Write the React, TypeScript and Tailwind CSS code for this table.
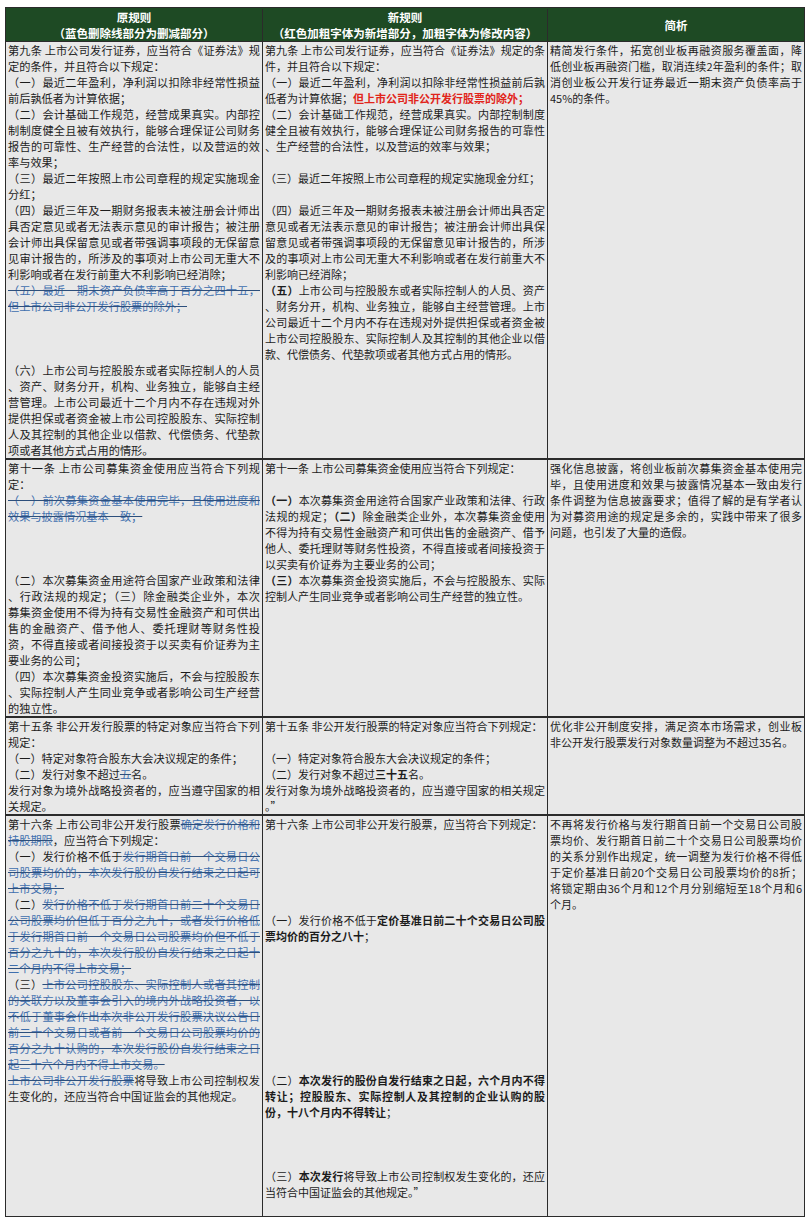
import React from "react";

type Seg = string | { t: string; k: "d" | "r" | "b" };
type Line = Seg | Seg[];
type Block = Line[] | null; // null = one empty line
type Row = { cells: [Block[], Block[], Block[]]; minH?: string };

const d = (t: string): Seg => ({ t, k: "d" });
const r = (t: string): Seg => ({ t, k: "r" });
const b = (t: string): Seg => ({ t, k: "b" });
const gap = (n: number): Block[] => Array(n).fill(null);

const segClass = {
  d: "text-[#3f6fae] line-through decoration-[#2d4f7c]",
  r: "font-bold text-[#e1251b]",
  b: "font-bold",
};

const rows: Row[] = [
  {
    cells: [
      [
        ["第九条 上市公司发行证券，应当符合《证券法》规", "定的条件，并且符合以下规定："],
        ["（一）最近二年盈利，净利润以扣除非经常性损益", "前后孰低者为计算依据；"],
        [
          "（二）会计基础工作规范，经营成果真实。内部控",
          "制制度健全且被有效执行，能够合理保证公司财务",
          "报告的可靠性、生产经营的合法性，以及营运的效",
          "率与效果；",
        ],
        ["（三）最近二年按照上市公司章程的规定实施现金", "分红；"],
        [
          "（四）最近三年及一期财务报表未被注册会计师出",
          "具否定意见或者无法表示意见的审计报告；被注册",
          "会计师出具保留意见或者带强调事项段的无保留意",
          "见审计报告的，所涉及的事项对上市公司无重大不",
          "利影响或者在发行前重大不利影响已经消除；",
        ],
        [d("（五）最近一期末资产负债率高于百分之四十五，"), d("但上市公司非公开发行股票的除外；")],
        ...gap(3),
        [
          "（六）上市公司与控股股东或者实际控制人的人员",
          "、资产、财务分开，机构、业务独立，能够自主经",
          "营管理。上市公司最近十二个月内不存在违规对外",
          "提供担保或者资金被上市公司控股股东、实际控制",
          "人及其控制的其他企业以借款、代偿债务、代垫款",
          "项或者其他方式占用的情形。",
        ],
      ],
      [
        ["第九条 上市公司发行证券，应当符合《证券法》规定的条", "件，并且符合以下规定："],
        [
          "（一）最近二年盈利，净利润以扣除非经常性损益前后孰",
          ["低者为计算依据；", r("但上市公司非公开发行股票的除外；")],
        ],
        [
          "（二）会计基础工作规范，经营成果真实。内部控制制度",
          "健全且被有效执行，能够合理保证公司财务报告的可靠性",
          "、生产经营的合法性，以及营运的效率与效果；",
        ],
        null,
        ["（三）最近二年按照上市公司章程的规定实施现金分红；"],
        null,
        [
          "（四）最近三年及一期财务报表未被注册会计师出具否定",
          "意见或者无法表示意见的审计报告；被注册会计师出具保",
          "留意见或者带强调事项段的无保留意见审计报告的，所涉",
          "及的事项对上市公司无重大不利影响或者在发行前重大不",
          "利影响已经消除；",
        ],
        [
          [b("（五）"), "上市公司与控股股东或者实际控制人的人员、资产"],
          "、财务分开，机构、业务独立，能够自主经营管理。上市",
          "公司最近十二个月内不存在违规对外提供担保或者资金被",
          "上市公司控股股东、实际控制人及其控制的其他企业以借",
          "款、代偿债务、代垫款项或者其他方式占用的情形。",
        ],
      ],
      [
        [
          "精简发行条件，拓宽创业板再融资服务覆盖面，降",
          "低创业板再融资门槛，取消连续2年盈利的条件；取",
          "消创业板公开发行证券最近一期末资产负债率高于",
          "45%的条件。",
        ],
      ],
    ],
  },
  {
    cells: [
      [
        ["第十一条 上市公司募集资金使用应当符合下列规", "定："],
        [d("（一）前次募集资金基本使用完毕，且使用进度和"), d("效果与披露情况基本一致；")],
        ...gap(3),
        [
          "（二）本次募集资金用途符合国家产业政策和法律",
          "、行政法规的规定；（三）除金融类企业外，本次",
          "募集资金使用不得为持有交易性金融资产和可供出",
          "售的金融资产、借予他人、委托理财等财务性投",
          "资，不得直接或者间接投资于以买卖有价证券为主",
          "要业务的公司；",
        ],
        [
          "（四）本次募集资金投资实施后，不会与控股股东",
          "、实际控制人产生同业竞争或者影响公司生产经营",
          "的独立性。",
        ],
      ],
      [
        ["第十一条 上市公司募集资金使用应当符合下列规定："],
        null,
        [
          [b("（一）"), "本次募集资金用途符合国家产业政策和法律、行政"],
          ["法规的规定；", b("（二）"), "除金融类企业外，本次募集资金使用"],
          "不得为持有交易性金融资产和可供出售的金融资产、借予",
          "他人、委托理财等财务性投资，不得直接或者间接投资于",
          "以买卖有价证券为主要业务的公司；",
        ],
        [
          [b("（三）"), "本次募集资金投资实施后，不会与控股股东、实际"],
          "控制人产生同业竞争或者影响公司生产经营的独立性。",
        ],
      ],
      [
        [
          "强化信息披露，将创业板前次募集资金基本使用完",
          "毕，且使用进度和效果与披露情况基本一致由发行",
          "条件调整为信息披露要求；值得了解的是有学者认",
          "为对募资用途的规定是多余的，实践中带来了很多",
          "问题，也引发了大量的造假。",
        ],
      ],
    ],
  },
  {
    cells: [
      [
        ["第十五条 非公开发行股票的特定对象应当符合下列", "规定："],
        ["（一）特定对象符合股东大会决议规定的条件；"],
        [["（二）发行对象不超过", d("五"), "名。"]],
        ["发行对象为境外战略投资者的，应当遵守国家的相", "关规定。"],
      ],
      [
        ["第十五条 非公开发行股票的特定对象应当符合下列规定："],
        null,
        ["（一）特定对象符合股东大会决议规定的条件；"],
        [["（二）发行对象不超过", b("三十五"), "名。"]],
        ["发行对象为境外战略投资者的，应当遵守国家的相关规定", "。”"],
      ],
      [
        [
          "优化非公开制度安排，满足资本市场需求，创业板",
          "非公开发行股票发行对象数量调整为不超过35名。",
        ],
      ],
    ],
  },
  {
    minH: "min-h-[400px]",
    cells: [
      [
        [
          ["第十六条 上市公司非公开发行股票", d("确定发行价格和")],
          [d("持股期限"), "，应当符合下列规定："],
        ],
        [
          ["（一）发行价格不低于", d("发行期首日前一个交易日公")],
          d("司股票均价的，本次发行股份自发行结束之日起可"),
          d("上市交易；"),
        ],
        [
          ["（二）", d("发行价格不低于发行期首日前二十个交易日")],
          d("公司股票均价但低于百分之九十，或者发行价格低"),
          d("于发行期首日前一个交易日公司股票均价但不低于"),
          d("百分之九十的，本次发行股份自发行结束之日起十"),
          d("二个月内不得上市交易；"),
        ],
        [
          ["（三）", d("上市公司控股股东、实际控制人或者其控制")],
          d("的关联方以及董事会引入的境内外战略投资者，以"),
          d("不低于董事会作出本次非公开发行股票决议公告日"),
          d("前二十个交易日或者前一个交易日公司股票均价的"),
          d("百分之九十认购的，本次发行股份自发行结束之日"),
          d("起三十六个月内不得上市交易。"),
        ],
        [
          [d("上市公司非公开发行股票"), "将导致上市公司控制权发"],
          "生变化的，还应当符合中国证监会的其他规定。",
        ],
      ],
      [
        ["第十六条 上市公司非公开发行股票，应当符合下列规定："],
        ...gap(5),
        [
          ["（一）发行价格不低于", b("定价基准日前二十个交易日公司股")],
          [b("票均价的百分之八十"), "；"],
        ],
        ...gap(8),
        [
          ["（二）", b("本次发行的股份自发行结束之日起，六个月内不得")],
          b("转让；控股股东、实际控制人及其控制的企业认购的股"),
          [b("份，十八个月内不得转让"), "；"],
        ],
        ...gap(3),
        [
          ["（三）", b("本次发行"), "将导致上市公司控制权发生变化的，还应"],
          "当符合中国证监会的其他规定。”",
        ],
      ],
      [
        [
          "不再将发行价格与发行期首日前一个交易日公司股",
          "票均价、发行期首日前二十个交易日公司股票均价",
          "的关系分别作出规定，统一调整为发行价格不得低",
          "于定价基准日前20个交易日公司股票均价的8折；",
          "将锁定期由36个月和12个月分别缩短至18个月和6",
          "个月。",
        ],
      ],
    ],
  },
];

const renderLine = (ln: Line) => {
  const segs = Array.isArray(ln) ? ln : [ln];
  return segs.map((s, i) =>
    typeof s === "string" ? (
      <React.Fragment key={i}>{s}</React.Fragment>
    ) : (
      <span key={i} className={segClass[s.k]}>
        {s.t}
      </span>
    )
  );
};

const Cell: React.FC<{ blocks: Block[]; className: string }> = ({ blocks, className }) => (
  <div className={className}>
    {blocks.map((p, i) =>
      p === null ? (
        <div key={i} className="h-4" />
      ) : (
        <div key={i}>
          {p.map((ln, j) => (
            <div
              key={j}
              className={j < p.length - 1 ? "text-justify [text-align-last:justify]" : ""}
            >
              {renderLine(ln)}
            </div>
          ))}
        </div>
      )
    )}
  </div>
);

const App: React.FC = () => {
  const font = { fontFamily: '"Noto Sans CJK SC", "Noto Sans", sans-serif' };

  return (
    <div className="min-h-[1223px] bg-white pt-[7px] pl-[5px]" style={font}>
      <div className="w-[800px] border border-[#2b2b2b] text-[#1c1c1c]">
        {/* header */}
        <div className="grid grid-cols-[257px_285px_256px] border-b border-[#2b2b2b] bg-[#1e4a24] pt-px text-center text-[11.5px] font-bold leading-4 text-white">
          <div className="border-r border-[#2b2b2b]">
            原规则
            <br />
            （蓝色删除线部分为删减部分）
          </div>
          <div className="border-r border-[#2b2b2b]">
            新规则
            <br />
            （红色加粗字体为新增部分，加粗字体为修改内容）
          </div>
          <div className="flex items-center justify-center">简析</div>
        </div>

        {rows.map((row, i) => (
          <div
            key={i}
            className={`grid grid-cols-[257px_285px_256px] bg-[#e8e8e8] leading-4 ${row.minH ?? ""} ${
              i < rows.length - 1 ? "border-b-2 border-[#2b2b2b]" : ""
            }`}
          >
            <Cell blocks={row.cells[0]} className="border-r border-[#2b2b2b] px-[2px] text-[11.2px]" />
            <Cell blocks={row.cells[1]} className="border-r border-[#2b2b2b] px-[2px] text-[11px]" />
            <Cell blocks={row.cells[2]} className="px-[2px] text-[11px]" />
          </div>
        ))}
      </div>
    </div>
  );
};

export default App;
